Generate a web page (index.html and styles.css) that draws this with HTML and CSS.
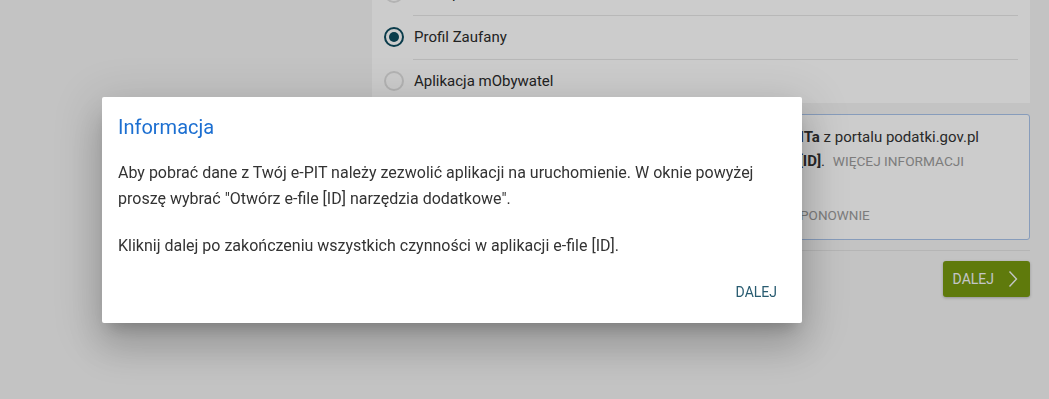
FILE: index.html
```html
<!DOCTYPE html>
<html lang="pl">
<head>
<meta charset="utf-8">
<title>e-file</title>
<link rel="stylesheet" href="styles.css">
</head>
<body>
<div class="page">
  <main class="content">
    <section class="panel">
      <label class="option">
        <span class="radio"></span>
        <span class="option-label">Dane podatkowe</span>
      </label>
      <label class="option">
        <span class="radio checked"></span>
        <span class="option-label">Profil Zaufany</span>
      </label>
      <label class="option">
        <span class="radio"></span>
        <span class="option-label">Aplikacja mObywatel</span>
      </label>
    </section>

    <section class="info-box">
      <p class="info-line line-1">Pobierz dane zeznania <b>Twój e-PITa</b> z portalu podatki.gov.pl</p>
      <p class="info-line line-2">Zaloguj się i uruchom aplikację <b>e-file [ID]</b>. <a class="link">Więcej informacji</a></p>
      <div class="info-actions">
        <a class="text-btn">Spróbuj ponownie</a>
      </div>
    </section>

    <hr class="sep">

    <div class="actions">
      <button class="btn-next">DALEJ
        <svg class="chev" width="10" height="18" viewBox="0 0 10 18"><path d="M1.5 1.5 L8.5 9 L1.5 16.5" fill="none" stroke="currentColor" stroke-width="1.4"/></svg>
      </button>
    </div>
  </main>
</div>

<div class="overlay"></div>

<div class="dialog" role="dialog">
  <h2 class="dialog-title">Informacja</h2>
  <div class="dialog-body">
    <p>Aby pobrać dane z Twój e-PIT należy zezwolić aplikacji na uruchomienie. W oknie powyżej proszę wybrać "Otwórz e-file [ID] narzędzia dodatkowe".</p>
    <p>Kliknij dalej po zakończeniu wszystkich czynności w aplikacji e-file [ID].</p>
  </div>
  <div class="dialog-actions">
    <button class="dialog-btn">DALEJ</button>
  </div>
</div>
</body>
</html>
```

FILE: styles.css
```css
html, body {
  margin: 0;
  padding: 0;
  height: 100%;
  overflow: hidden;
}
body {
  background: #f4f4f4;
  font-family: Roboto, "Liberation Sans", sans-serif;
  color: #2b2b2b;
}
.page {
  display: flex;
  padding-left: 372px;
}
.content {
  width: 658px;
  display: flex;
  flex-direction: column;
}
.panel {
  background: #ffffff;
  margin-top: -29px;
  padding: 0 12px;
}
.option {
  display: flex;
  align-items: center;
  gap: 10px;
  height: 44px;
  font-size: 15px;
  color: #2b2b2b;
  position: relative;
}
.option + .option::before {
  content: "";
  position: absolute;
  top: 0;
  left: 29px;
  right: 0;
  height: 1px;
  background: #e6e6e6;
}
.radio {
  width: 20px;
  height: 20px;
  box-sizing: border-box;
  border: 2px solid #e0e0e0;
  border-radius: 50%;
  flex: none;
  position: relative;
}
.radio.checked {
  border-color: #0d4b5e;
}
.radio.checked::after {
  content: "";
  position: absolute;
  left: 3px;
  top: 3px;
  width: 10px;
  height: 10px;
  border-radius: 50%;
  background: #0d4b5e;
}
.info-box {
  margin-top: 11px;
  border: 1px solid #a9c3ea;
  border-radius: 3px;
  background: #ffffff;
  padding: 10px 16px 6px 16px;
  font-size: 15px;
  line-height: 24px;
  color: #333;
  height: 126px;
  box-sizing: border-box;
  overflow: hidden;
}
.info-line {
  margin: 0;
  white-space: nowrap;
}
.line-1 {
  padding-left: 197px;
}
.line-2 {
  padding-left: 161px;
}
.info-line b {
  font-weight: 700;
}
.link {
  margin-left: 4px;
  text-transform: uppercase;
  font-size: 13.7px;
  color: #9c9c9c;
}
.info-actions {
  margin-top: 24px;
  height: 36px;
  display: flex;
  align-items: center;
  padding-left: 349px;
}
.text-btn {
  text-transform: uppercase;
  font-size: 13.5px;
  color: #9c9c9c;
}
.sep {
  margin: 10px 0 0 0;
  border: 0;
  height: 1px;
  background: #e3e3e3;
}
.actions {
  display: flex;
  justify-content: flex-end;
  margin-top: 10px;
}
.btn-next {
  height: 36px;
  border: 0;
  border-radius: 3px;
  background: #77990f;
  color: #f4f7f9;
  font-family: Roboto, "Liberation Sans", sans-serif;
  font-size: 14px;
  display: flex;
  align-items: center;
  padding: 0 12px 0 10px;
  gap: 14px;
  box-shadow: 0 1px 3px rgba(0,0,0,0.25);
}
.overlay {
  position: fixed;
  inset: 0;
  background: rgba(0, 0, 0, 0.2);
}
.dialog {
  position: absolute;
  left: 102px;
  top: 97px;
  width: 700px;
  height: 226px;
  box-sizing: border-box;
  background: #ffffff;
  border-radius: 2px;
  padding: 16px 16px 13px 16px;
  box-shadow: 0 11px 15px -7px rgba(0,0,0,.2), 0 24px 38px 3px rgba(0,0,0,.14), 0 9px 46px 8px rgba(0,0,0,.12);
  display: flex;
  flex-direction: column;
}
.dialog-title {
  margin: 0;
  font-size: 20px;
  font-weight: 400;
  line-height: 28px;
  color: #1c6fd1;
}
.dialog-body {
  margin-top: 19px;
  font-size: 16px;
  line-height: 26px;
  color: #333;
}
.dialog-body p {
  margin: 0;
}
.dialog-body p + p {
  margin-top: 21px;
}
.dialog-actions {
  margin-top: 15px;
  display: flex;
  justify-content: flex-end;
}
.dialog-btn {
  height: 36px;
  border: 0;
  background: transparent;
  font-family: Roboto, "Liberation Sans", sans-serif;
  font-size: 14px;
  color: #285b70;
  padding: 0 9px;
}
```
